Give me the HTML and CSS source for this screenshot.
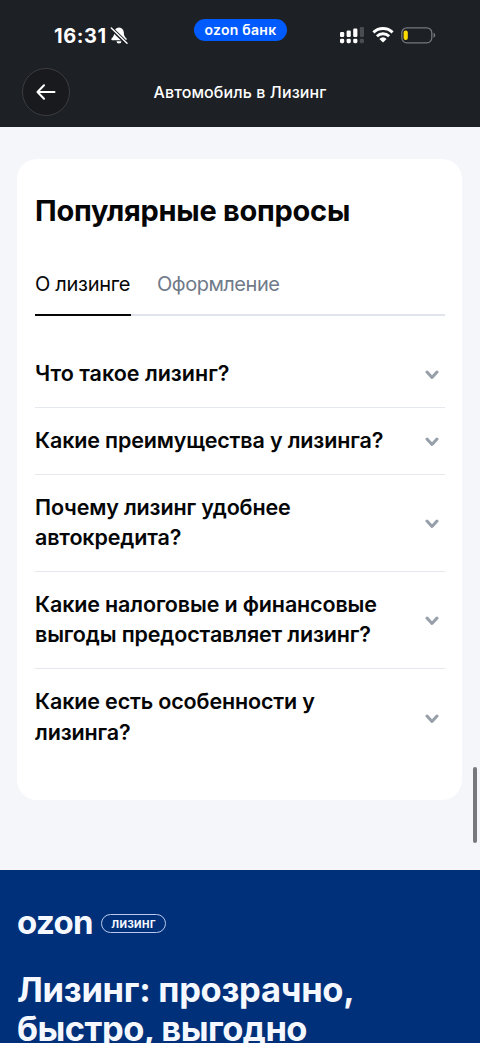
FILE: index.html
```html
<!DOCTYPE html>
<html lang="ru">
<head>
<meta charset="utf-8">
<title>Автомобиль в Лизинг</title>
<link rel="stylesheet" href="styles.css">
</head>
<body>
<div class="screen">
  <header class="top">
    <div class="status">
      <div class="clock"><span class="time">16:31</span>
        <svg class="bell" width="18" height="19" viewBox="0 0 18 19"><path fill="#fff" d="M9 1.500C5.800 1.700 4.200 4 4.200 6.500c0 3-1 4.300-2.500 5.800-.8.9-.4 1.900.6 1.900h13.400c1 0 1.400-1 .6-1.900-1.500-1.500-2.500-2.800-2.500-5.800 0-2.500-1.600-4.800-4.800-5zM6.500 15.200a2.500 2.300 0 0 0 5 0z"/><path d="M1.500 2.700 16.500 17.200" stroke="#1d2024" stroke-width="3.800"/><path d="M1.300 2 17 17.300" stroke="#fff" stroke-width="1.400" stroke-linecap="round"/></svg>
      </div>
      <div class="bank">ozon банк</div>
      <div class="indicators">
        <svg width="25" height="17" viewBox="0 0 25 17" fill="#fff"><rect y="5" width="4.200" height="5" rx="1.200"/><rect x="6.600" y="3.500" width="4.200" height="6.500" rx="1.200"/><rect x="13.200" y="1.500" width="4.200" height="8.500" rx="1.200"/><rect x="19.800" width="4.200" height="10" rx="1.200" fill="#494c50"/><rect y="11.700" width="4.200" height="4.500" rx="1.400"/><rect x="6.600" y="11.700" width="4.200" height="4.500" rx="1.400"/><rect x="13.200" y="11.700" width="4.200" height="4.500" rx="1.400"/><rect x="19.800" y="11.700" width="4.200" height="4.500" rx="1.400" fill="#494c50"/></svg>
        <svg class="wifi" width="22" height="16" viewBox="0 0 22 16" fill="none" stroke="#fff" stroke-width="2.900"><path d="M1.400 5.400a13.900 13.900 0 0 1 19.200 0M4.900 9.200a8.800 8.800 0 0 1 12.200 0"/><path fill="#fff" stroke="none" d="m11 15.500-3.600-3.600a5 5 0 0 1 7.200 0z"/></svg>
        <svg class="battery" width="35" height="17" viewBox="0 0 35 17"><rect x=".8" y=".8" width="30" height="15" rx="5" fill="none" stroke="#74777b" stroke-width="1.300"/><rect x="2.600" y="3.500" width="4.200" height="9.500" rx="2" fill="#ffdc00"/><path d="M32.500 5.800q1.800.8 1.800 2.500t-1.800 2.500z" fill="#74777b"/></svg>
      </div>
    </div>
    <div class="nav">
      <div class="back"><svg width="20" height="16" viewBox="0 0 20 16" fill="none" stroke="#fff" stroke-width="2" stroke-linecap="round" stroke-linejoin="round"><path d="M18.500 8H1.500M8 1.300 1.500 8 8 14.700"/></svg></div>
      <div class="nav-title">Автомобиль в Лизинг</div>
    </div>
  </header>
  <main class="page">
    <section class="card">
      <h1>Популярные вопросы</h1>
      <div class="tabs"><div class="tab active">О лизинге</div><div class="tab second">Оформление</div></div>
      <div class="list">
        <div class="row"><p class="q short">Что такое лизинг?</p><svg class="chev" viewBox="0 0 14 10"><path d="m2 2 5 5.500L12 2"/></svg></div>
        <div class="row"><p class="q">Какие преимущества у лизинга?</p><svg class="chev" viewBox="0 0 14 10"><path d="m2 2 5 5.500L12 2"/></svg></div>
        <div class="row"><p class="q">Почему лизинг удобнее<br>автокредита?</p><svg class="chev" viewBox="0 0 14 10"><path d="m2 2 5 5.500L12 2"/></svg></div>
        <div class="row"><p class="q">Какие налоговые и финансовые<br>выгоды предоставляет лизинг?</p><svg class="chev" viewBox="0 0 14 10"><path d="m2 2 5 5.500L12 2"/></svg></div>
        <div class="row"><p class="q">Какие есть особенности у<br>лизинга?</p><svg class="chev" viewBox="0 0 14 10"><path d="m2 2 5 5.500L12 2"/></svg></div>
      </div>
    </section>
  </main>
  <footer class="footer">
    <div class="brand"><span class="logo">ozon</span><span class="pill">лизинг</span></div>
    <h2>Лизинг: прозрачно,<br><span class="tight">быстро, выгодно</span></h2>
  </footer>
  <div class="scroll"></div>
</div>
</body>
</html>
```
FILE: styles.css
```css
* { box-sizing: border-box; }
body { margin: 0; font-family: Inter, "Noto Sans", sans-serif; color: #050607; }
h1, h2, p { margin: 0; }
svg { display: block; flex: none; }
.screen { position: relative; width: 480px; height: 1043px; overflow: hidden; background: #f5f6fa; white-space: nowrap; }
.top { height: 127px; background: #1d2024; color: #fff; }
.status { height: 67px; display: grid; grid-template-columns: 194px 93px 1fr; align-items: start; }
.clock { display: flex; padding: 23px 0 0 54px; gap: 3px; }
.time { font-size: 20px; line-height: 26px; font-weight: 700; letter-spacing: .55px; }
.bell { margin-top: 3px; }
.bank { height: 22px; margin-top: 19px; border-radius: 11px; background: #005bff; text-align: center; font: 600 14px/21px Inter, sans-serif; letter-spacing: .25px; }
.indicators { display: flex; padding: 27px 0 0 53px; }
.wifi { margin-left: 7px; }
.battery { margin-left: 7px; }
.nav { height: 49px; padding-left: 22px; display: grid; grid-template-columns: 48px 340px; align-items: center; }
.back { width: 48px; height: 48px; border: 1px solid #3b3c3f; border-radius: 50%; background: #191a1e; display: flex; align-items: center; justify-content: center; }
.nav-title { text-align: center; font-size: 16px; font-weight: 500; letter-spacing: .1px; }
.page { height: 743px; padding: 32px 18px 0 17px; }
.card { height: 641px; border-radius: 20px; background: #fff; padding: 32px 17px 0 18px; }
h1 { font-size: 29px; line-height: 40px; font-weight: 700; letter-spacing: -.27px; }
.tabs { height: 53px; margin-top: 32px; display: flex; gap: 26px; box-shadow: inset 0 -2px #e1e4ec; }
.tab { height: 53px; font-size: 20px; line-height: 42px; color: #707a89; letter-spacing: -.3px; }
.active { width: 96px; color: #050607; border-bottom: 2px solid #050607; }
.second { letter-spacing: -.48px; }
.list { margin-top: 25px; }
.row { display: flex; align-items: center; justify-content: space-between; padding: 17px 6px 17px 0; border-bottom: 1px solid #e5e8ec; }
.row:last-child { border: 0; }
.q { padding-bottom: 2px; font-size: 21.5px; line-height: 30.5px; font-weight: 600; letter-spacing: -.15px; }
.row { height: 97px; }
.row:nth-child(-n+2) { height: 67px; }
.short { letter-spacing: 0; }
.chev { width: 14px; height: 10px; margin-top: 2px; fill: none; stroke: #979faa; stroke-width: 3; stroke-linecap: round; stroke-linejoin: round; }
.footer { height: 173px; background: #00307a; color: #f5f8ff; padding: 35px 17px 0; }
.brand { height: 34px; display: flex; align-items: center; gap: 8px; }
.logo { width: 76px; font-size: 33px; line-height: 34px; font-weight: 700; letter-spacing: -.7px; }
.pill { width: 65px; height: 19px; margin-top: 2px; border: 1px solid #b9caee; border-radius: 10px; font-size: 13px; line-height: 16px; font-weight: 600; text-align: center; }
h2 { margin-top: 31px; font-size: 34.5px; line-height: 39px; font-weight: 700; letter-spacing: -.28px; }
.tight { letter-spacing: -.53px; }
.scroll { position: absolute; right: 3px; top: 767px; width: 4px; height: 76px; border-radius: 2px; background: #77787b; }
```
